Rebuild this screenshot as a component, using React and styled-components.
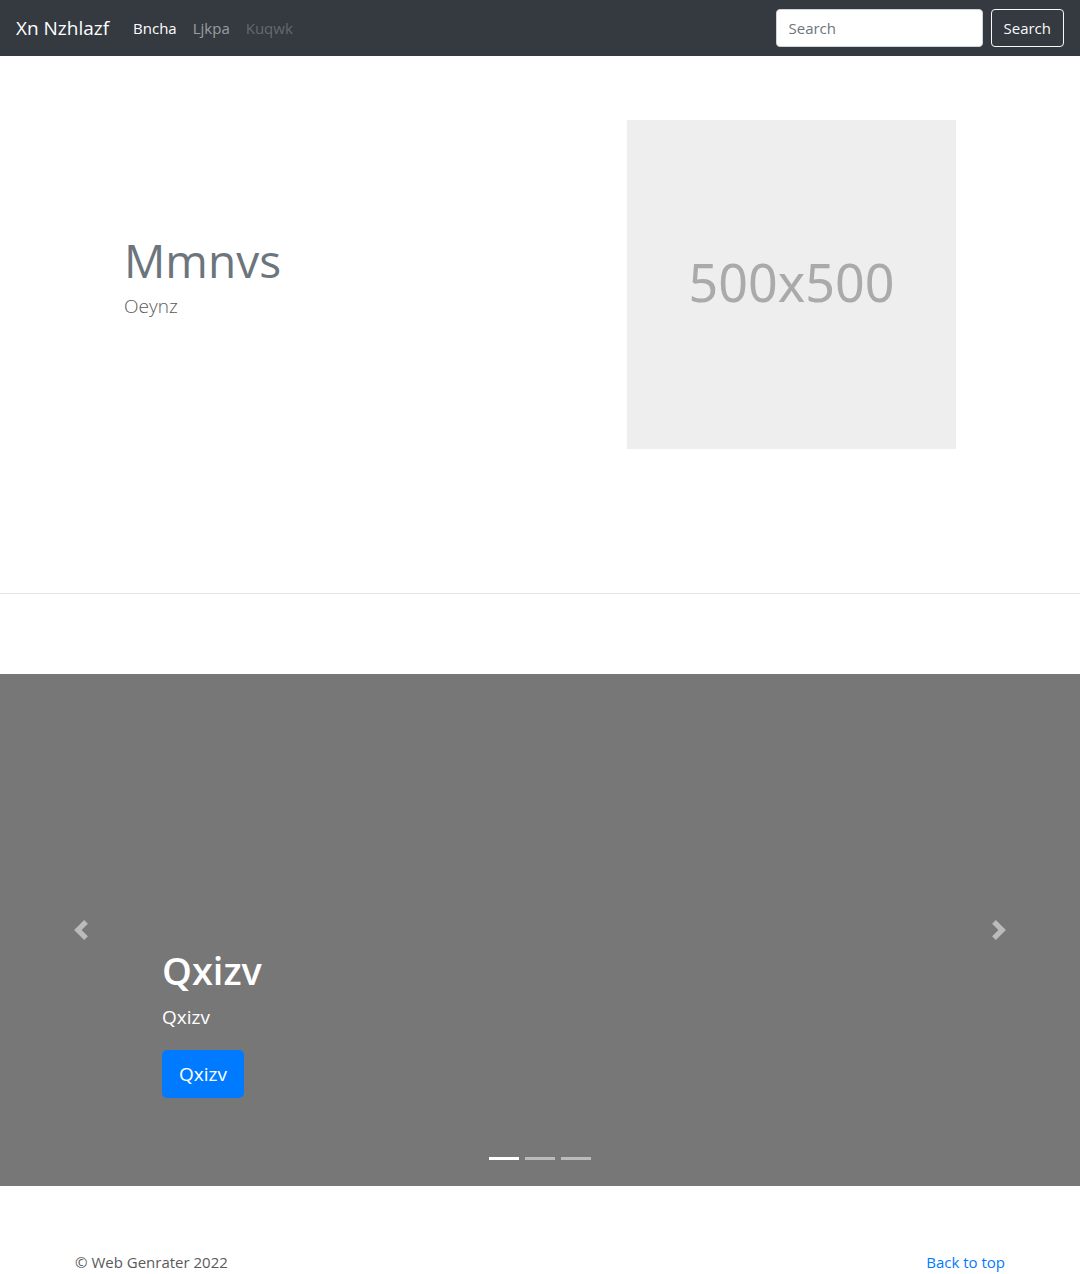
import React, { useState } from "react";
import styled, { createGlobalStyle } from "styled-components";

const GlobalStyle = createGlobalStyle`
  *, *::before, *::after { box-sizing: border-box; }
  body {
    margin: 0;
    background: #fff;
    color: #5a5a5a;
    font-family: "Open Sans", "Noto Sans", sans-serif;
    font-size: 15px;
    line-height: 24px;
  }
  h1, h2, p, ul { margin: 0; padding: 0; }
  button, input { font: inherit; }
`;

const Navbar = styled.header`
  display: flex;
  align-items: center;
  justify-content: space-between;
  height: 56px;
  padding: 0 16px;
  background: #343a40;
`;

const NavGroup = styled.nav`
  display: flex;
  align-items: center;
  gap: 24px;
`;

const Brand = styled.a`
  color: #fff;
  font-size: 19px;
  line-height: 30px;
  text-decoration: none;
`;

const NavList = styled.ul`
  display: flex;
  gap: 16px;
  list-style: none;
`;

const linkColors = {
  active: "#fff",
  normal: "rgba(255, 255, 255, 0.5)",
  disabled: "rgba(255, 255, 255, 0.25)",
};

const NavLink = styled.a`
  color: ${({ $state }) => linkColors[$state]};
  text-decoration: none;
`;

const SearchForm = styled.form`
  display: flex;
  gap: 8px;
`;

const SearchInput = styled.input`
  width: 207px;
  height: 38px;
  padding: 6px 12px;
  border: 1px solid #ced4da;
  border-radius: 4px;
  background: #fff;
  color: #495057;
  &::placeholder { color: #6c757d; opacity: 1; }
`;

const SearchButton = styled.button`
  height: 38px;
  padding: 0 12px;
  border: 1px solid #f8f9fa;
  border-radius: 4px;
  background: transparent;
  color: #f8f9fa;
  cursor: pointer;
`;

const Feature = styled.section`
  display: flex;
  max-width: 862px;
  margin: 0 auto;
  padding: 64px 0;
`;

const FeatureColumn = styled.div`
  flex: 0 0 calc(100% * ${({ $span }) => $span} / 12);
  padding: 0 15px;
`;

const FeatureTitle = styled.h2`
  margin-top: 112px;
  color: #6c757d;
  font-size: 46px;
  font-weight: 400;
  line-height: 56px;
`;

const Lead = styled.p`
  font-size: 19px;
  font-weight: 300;
  line-height: 36px;
`;

const Placeholder = styled.div`
  display: grid;
  place-items: center;
  aspect-ratio: 1;
  padding-bottom: 6px;
  background: #eee;
  color: #aaa;
  font-family: "Noto Sans", sans-serif;
  font-size: 52px;
  line-height: 60px;
`;

const Divider = styled.hr`
  margin: 80px 0;
  border: 0;
  border-top: 1px solid rgba(0, 0, 0, 0.1);
`;

const Carousel = styled.section`
  position: relative;
  display: grid;
  grid-template-columns: 15% 1fr 15%;
  min-height: 512px;
  background: #777;
`;

const CarouselControl = styled.button`
  display: grid;
  place-items: center;
  padding: 0;
  border: 0;
  background: transparent;
  color: #fff;
  opacity: 0.5;
  cursor: pointer;
`;

const Caption = styled.div`
  align-self: end;
  padding-bottom: 88px;
  color: #fff;
`;

const CaptionTitle = styled.h1`
  font-size: 38px;
  font-weight: 600;
  line-height: 48px;
`;

const CaptionText = styled.p`
  margin: 8px 0 18px;
  font-size: 19px;
  line-height: 30px;
`;

const CaptionButton = styled.a`
  display: inline-block;
  padding: 9px 17px;
  border-radius: 5px;
  background: #007bff;
  color: #fff;
  font-size: 19px;
  line-height: 30px;
  text-decoration: none;
  vertical-align: top;
`;

const Indicators = styled.div`
  position: absolute;
  right: 0;
  bottom: 16px;
  left: 0;
  display: flex;
  justify-content: center;
  gap: 6px;
`;

const Indicator = styled.button`
  width: 30px;
  height: 23px;
  padding: 0;
  border: 0;
  border-top: 10px solid transparent;
  border-bottom: 10px solid transparent;
  background: #fff;
  background-clip: padding-box;
  opacity: ${({ $active }) => ($active ? 1 : 0.5)};
  cursor: pointer;
`;

const Footer = styled.footer`
  display: flex;
  justify-content: space-between;
  max-width: 960px;
  margin: 64px auto 0;
  padding: 0 15px;
`;

const FooterLink = styled.a`
  color: #007bff;
  text-decoration: none;
`;

const links = [
  { label: "Bncha", state: "active" },
  { label: "Ljkpa", state: "normal" },
  { label: "Kuqwk", state: "disabled" },
];

const SLIDE_COUNT = 3;

function Chevron({ direction }) {
  const path =
    direction === "left"
      ? "M5.25 0l-4 4 4 4 1.5-1.5-2.5-2.5 2.5-2.5-1.5-1.5z"
      : "M2.75 0l-1.5 1.5 2.5 2.5-2.5 2.5 1.5 1.5 4-4-4-4z";
  return (
    <svg width="20" height="20" viewBox="0 0 8 8" fill="currentColor" aria-hidden="true">
      <path d={path} />
    </svg>
  );
}

export default function App() {
  const [slide, setSlide] = useState(0);
  const move = (step) => setSlide((slide + step + SLIDE_COUNT) % SLIDE_COUNT);

  return (
    <>
      <GlobalStyle />
      <Navbar id="top">
        <NavGroup>
          <Brand href="#">Xn Nzhlazf</Brand>
          <NavList>
            {links.map(({ label, state }) => (
              <li key={label}>
                <NavLink href="#" $state={state}>{label}</NavLink>
              </li>
            ))}
          </NavList>
        </NavGroup>
        <SearchForm onSubmit={(event) => event.preventDefault()}>
          <SearchInput type="text" placeholder="Search" aria-label="Search" />
          <SearchButton type="submit">Search</SearchButton>
        </SearchForm>
      </Navbar>
      <main>
        <Feature>
          <FeatureColumn $span={7}>
            <FeatureTitle>Mmnvs</FeatureTitle>
            <Lead>Oeynz</Lead>
          </FeatureColumn>
          <FeatureColumn $span={5}>
            <Placeholder>500x500</Placeholder>
          </FeatureColumn>
        </Feature>
        <Divider />
        <Carousel>
          <CarouselControl type="button" aria-label="Previous" onClick={() => move(-1)}>
            <Chevron direction="left" />
          </CarouselControl>
          <Caption>
            <CaptionTitle>Qxizv</CaptionTitle>
            <CaptionText>Qxizv</CaptionText>
            <CaptionButton href="#">Qxizv</CaptionButton>
          </Caption>
          <CarouselControl type="button" aria-label="Next" onClick={() => move(1)}>
            <Chevron direction="right" />
          </CarouselControl>
          <Indicators>
            {Array.from({ length: SLIDE_COUNT }, (_, index) => (
              <Indicator
                key={index}
                type="button"
                aria-label={`Slide ${index + 1}`}
                $active={index === slide}
                onClick={() => setSlide(index)}
              />
            ))}
          </Indicators>
        </Carousel>
      </main>
      <Footer>
        <p>© Web Genrater 2022</p>
        <FooterLink href="#top">Back to top</FooterLink>
      </Footer>
    </>
  );
}
